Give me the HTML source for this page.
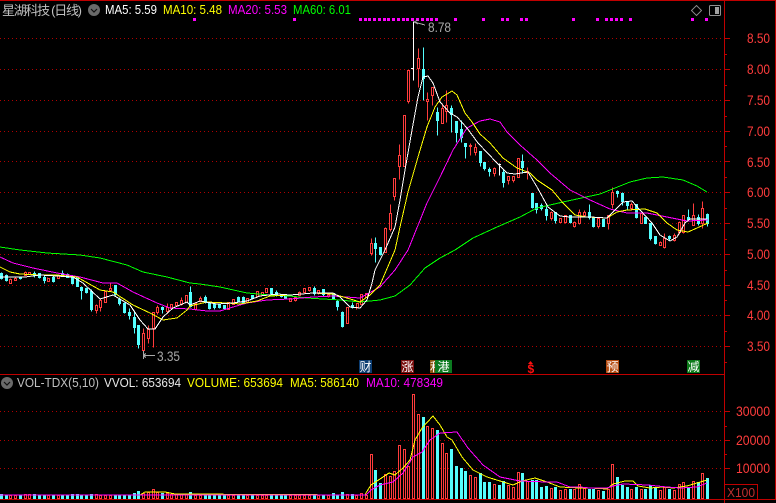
<!DOCTYPE html>
<html><head><meta charset="utf-8"><title>星湖科技</title>
<style>
html,body{margin:0;padding:0;background:#000;width:776px;height:503px;overflow:hidden}
svg{display:block;position:absolute;left:0;top:0}
text{font-family:"Liberation Sans",sans-serif;font-size:12.5px}
.cjk{font-family:"Liberation Sans","WenQuanYi Zen Hei","Noto Sans CJK SC",sans-serif}
.ax{fill:#ff3c3c;font-size:14px}
.g{fill:none;stroke:#b00000;stroke-width:1;stroke-dasharray:1 3}
.ma{fill:none;stroke-width:1;shape-rendering:crispEdges}
</style></head><body>
<svg width="776" height="503" viewBox="0 0 776 503" xmlns="http://www.w3.org/2000/svg">
<rect width="776" height="503" fill="#000"/>
<!-- grid -->
<g shape-rendering="crispEdges">
<path class="g" d="M0 38.5H724M0 69.5H724M0 100.5H724M0 131.5H724M0 161.5H724M0 192.5H724M0 223.5H724M0 254.5H724M0 285.5H724M0 315.5H724M0 346.5H724M0 411.5H724M0 440.5H724M0 468.5H724"/>
<!-- frame -->
<path fill="none" stroke="#c00000" d="M0 .5H776M724.5 0V503M775.5 0V500M0 374.5H724M0 499.5H776M724 484.5H757.5V499"/>
<path fill="none" stroke="#c00000" d="M725 38.5h5M725 54.5h2M725 69.5h5M725 85.5h2M725 100.5h5M725 116.5h2M725 131.5h5M725 146.5h2M725 161.5h5M725 177.5h2M725 192.5h5M725 208.5h2M725 223.5h5M725 239.5h2M725 254.5h5M725 270.5h2M725 285.5h5M725 300.5h2M725 315.5h5M725 331.5h2M725 346.5h5M725 362.5h2M725 411.5h5M725 426.5h2M725 440.5h5M725 454.5h2M725 468.5h5"/>
</g>
<!-- dots -->
<g fill="#ff00ff" shape-rendering="crispEdges">
<path d="M193 18h3v3h-3zM293 18h3v3h-3zM359 18h3v3h-3zM364 18h3v3h-3zM368 18h3v3h-3zM373 18h3v3h-3zM378 18h3v3h-3zM383 18h3v3h-3zM387 18h3v3h-3zM392 18h3v3h-3zM397 18h3v3h-3zM402 18h3v3h-3zM406 18h3v3h-3zM411 18h3v3h-3zM416 18h3v3h-3zM421 18h3v3h-3zM426 18h3v3h-3zM430 18h3v3h-3zM435 18h3v3h-3zM454 18h3v3h-3zM482 18h3v3h-3zM501 18h3v3h-3zM506 18h3v3h-3zM520 18h3v3h-3zM525 18h3v3h-3zM572 18h3v3h-3zM596 18h3v3h-3zM605 18h3v3h-3zM610 18h3v3h-3zM615 18h3v3h-3zM620 18h3v3h-3zM629 18h3v3h-3zM691 18h3v3h-3zM705 18h3v3h-3z"/>
</g>
<!-- candles -->
<g transform="translate(0,.5)" stroke-width="1" shape-rendering="crispEdges">
<path stroke="#ff3c3c" fill="#000" d="M10.5 278V279M9.5 279h2V283h-2zM15.5 277V278M14.5 278h2V280h-2zM25.5 271V272M24.5 272h2V275h-2zM28.5 272h2V274h-2zM47.5 277V278M47.5 278h2V281h-2zM58.5 274V275M57.5 275h2V278h-2zM96.5 304V305M95.5 305h2V310h-2zM96.5 310V313M100.5 299V300M99.5 300h2V307h-2zM100.5 307V311M104.5 291h2V302h-2zM110.5 283V288M109.5 288h2V290h-2zM143.5 328V333M142.5 333h2V350h-2zM143.5 350V355M148.5 325V329M147.5 329h2V338h-2zM148.5 338V343M152.5 312h2V328h-2zM153.5 328V347M157.5 305V307M156.5 307h2V312h-2zM157.5 312V314M167.5 303V307M166.5 307h2V311h-2zM167.5 311V312M170.5 304h2V308h-2zM171.5 308V309M175.5 302h2V305h-2zM181.5 297V300M180.5 300h2V304h-2zM181.5 304V305M185.5 295h2V302h-2zM194.5 303h2V309h-2zM195.5 309V310M200.5 296V298M199.5 298h2V301h-2zM200.5 301V302M227.5 302h2V309h-2zM232.5 299h2V304h-2zM246.5 298h2V302h-2zM256.5 291h2V296h-2zM257.5 296V297M261.5 292h2V295h-2zM265.5 288h2V292h-2zM289.5 298h2V301h-2zM295.5 296V297M294.5 297h2V300h-2zM295.5 300V301M299.5 291V292M298.5 292h2V295h-2zM303.5 288h2V292h-2zM308.5 287h2V290h-2zM309.5 290V291M317.5 290h2V293h-2zM318.5 293V294M328.5 293V294M327.5 294h2V296h-2zM328.5 296V297M346.5 307h2V323h-2zM356.5 303h2V307h-2zM356.5 307V309M360.5 294h2V304h-2zM365.5 293h2V297h-2zM371.5 238V243M370.5 243h2V253h-2zM371.5 253V255M385.5 227V228M384.5 228h2V252h-2zM390.5 204V213M389.5 213h2V229h-2zM390.5 229V231M393.5 178h2V196h-2zM394.5 196V200M399.5 144V155M398.5 155h2V166h-2zM399.5 166V179M403.5 115h2V166h-2zM407.5 70h2V101h-2zM408.5 101V103M418.5 48V58M417.5 58h2V68h-2zM418.5 68V87M427.5 92V99M426.5 99h2V101h-2zM427.5 101V120M431.5 87h2V95h-2zM432.5 95V105M442.5 103V108M441.5 108h2V123h-2zM446.5 90V105M445.5 105h2V111h-2zM446.5 111V122M470.5 143V145M469.5 145h2V146h-2zM470.5 146V155M475.5 143V147M474.5 147h2V152h-2zM475.5 152V155M494.5 167V168M493.5 168h2V173h-2zM494.5 173V176M507.5 176h2V180h-2zM508.5 180V184M512.5 176h2V180h-2zM513.5 180V182M517.5 158h2V177h-2zM527.5 167V171M526.5 171h2V172h-2zM527.5 172V179M551.5 211V212M550.5 212h2V218h-2zM551.5 218V220M559.5 218h2V222h-2zM564.5 215h2V222h-2zM565.5 222V223M574.5 221V222M573.5 222h2V226h-2zM574.5 226V227M579.5 209V212M578.5 212h2V223h-2zM579.5 223V224M584.5 210V212M583.5 212h2V215h-2zM584.5 215V217M597.5 218h2V226h-2zM598.5 226V228M607.5 215h2V223h-2zM608.5 223V229M612.5 187V192M611.5 192h2V204h-2zM612.5 204V208M631.5 202V204M630.5 204h2V208h-2zM631.5 208V210M640.5 213h2V223h-2zM660.5 241V242M659.5 242h2V245h-2zM664.5 233V238M663.5 238h2V247h-2zM664.5 247V248M674.5 233V235M673.5 235h2V240h-2zM674.5 240V241M679.5 221V222M678.5 222h2V232h-2zM679.5 232V234M682.5 215h2V232h-2zM683.5 232V233M693.5 203V215M692.5 215h2V225h-2zM702.5 201V208M701.5 208h2V223h-2zM702.5 223V228"/>
<path stroke="#54ffff" fill="#54ffff" d="M1.5 272V273M.5 273h2V278h-2zM1.5 278V279M6.5 274V275M5.5 275h2V280h-2zM6.5 280V281M19.5 277h2V278h-2zM20.5 278V279M34.5 271V273M33.5 273h2V275h-2zM34.5 275V277M38.5 273h2V277h-2zM39.5 277V278M44.5 275V277M43.5 277h2V280h-2zM44.5 280V283M53.5 276V277M52.5 277h2V281h-2zM53.5 281V282M62.5 270V273M61.5 273h2V275h-2zM67.5 273V274M66.5 274h2V277h-2zM72.5 275V276M71.5 276h2V283h-2zM72.5 283V284M76.5 277V278M76.5 278h2V286h-2zM81.5 286V287M80.5 287h2V290h-2zM81.5 290V299M86.5 287V288M85.5 288h2V292h-2zM86.5 292V293M91.5 289V291M90.5 291h2V309h-2zM91.5 309V311M114.5 285h2V294h-2zM115.5 294V295M119.5 297V299M118.5 299h2V303h-2zM119.5 303V305M124.5 302V303M123.5 303h2V312h-2zM124.5 312V313M129.5 308V312M128.5 312h2V315h-2zM129.5 315V319M134.5 310V317M133.5 317h2V327h-2zM134.5 327V333M137.5 325h2V344h-2zM138.5 344V348M162.5 306V307M161.5 307h2V309h-2zM162.5 309V313M190.5 286V292M189.5 292h2V306h-2zM190.5 306V307M205.5 295V297M204.5 297h2V302h-2zM205.5 302V303M208.5 303h2V308h-2zM209.5 308V309M214.5 303V304M213.5 304h2V307h-2zM214.5 307V309M218.5 304h2V307h-2zM219.5 307V308M223.5 305h2V308h-2zM224.5 308V309M238.5 296V297M237.5 297h2V301h-2zM238.5 301V302M243.5 296V297M242.5 297h2V302h-2zM243.5 302V303M251.5 295h2V298h-2zM252.5 298V299M270.5 288h2V293h-2zM271.5 293V294M276.5 290V292M275.5 292h2V295h-2zM276.5 295V296M280.5 294h2V296h-2zM281.5 296V297M284.5 294V294M284.5 294h2V298h-2zM285.5 298V299M314.5 286V288M313.5 288h2V293h-2zM314.5 293V295M322.5 289h2V294h-2zM323.5 294V296M332.5 293h2V299h-2zM337.5 299V301M336.5 301h2V306h-2zM337.5 306V310M342.5 311V312M341.5 312h2V326h-2zM342.5 326V327M352.5 302V305M351.5 305h2V307h-2zM352.5 307V308M375.5 237V243M374.5 243h2V248h-2zM375.5 248V262M379.5 247h2V254h-2zM380.5 254V255M423.5 47V69M422.5 69h2V78h-2zM423.5 78V100M437.5 107V112M436.5 112h2V120h-2zM437.5 120V135M451.5 105V108M450.5 108h2V114h-2zM451.5 114V132M455.5 121h2V132h-2zM456.5 132V142M461.5 120V129M460.5 129h2V137h-2zM461.5 137V142M464.5 143h2V146h-2zM465.5 146V158M479.5 151h2V162h-2zM480.5 162V166M483.5 162h2V168h-2zM484.5 168V170M489.5 167V169M488.5 169h2V171h-2zM489.5 171V176M503.5 169V172M502.5 172h2V182h-2zM503.5 182V187M522.5 154V161M521.5 161h2V167h-2zM522.5 167V173M531.5 193h2V207h-2zM532.5 207V208M535.5 203h2V209h-2zM536.5 209V213M541.5 203V205M540.5 205h2V208h-2zM541.5 208V210M546.5 205V209M545.5 209h2V215h-2zM546.5 215V220M554.5 212h2V220h-2zM555.5 220V223M569.5 215h2V222h-2zM570.5 222V223M589.5 204V212M588.5 212h2V217h-2zM589.5 217V219M592.5 217h2V226h-2zM593.5 226V227M602.5 219h2V226h-2zM617.5 190V191M616.5 191h2V193h-2zM617.5 193V197M622.5 192V193M621.5 193h2V201h-2zM622.5 201V205M627.5 201V202M626.5 202h2V205h-2zM627.5 205V210M635.5 204h2V217h-2zM636.5 217V218M644.5 217h2V223h-2zM649.5 223h2V238h-2zM650.5 238V240M654.5 236h2V243h-2zM655.5 243V244M669.5 235V236M668.5 236h2V238h-2zM669.5 238V240M688.5 209V217M687.5 217h2V219h-2zM688.5 219V220M698.5 214V217M697.5 217h2V223h-2zM698.5 223V225M707.5 213V214M706.5 214h2V223h-2zM707.5 223V226"/>
<path stroke="#fff" fill="none" d="M413.5 21V80M411 68h2M499.5 163V175M498 164h3M106 283h0"/>
</g>
<!-- price MAs -->
<polyline class="ma" stroke="#00ff00" points="0,247 20,250 47,253 80,255 100,258 127,265 143,272 167,277 190,283 200,284 220,287 247,293 270,295 290,296 307,298 323,299 340,300 360,302 380,300 395,296 410,285 425,268 440,258 455,250 473,238 497,227 520,217 537,208 563,202 600,194 630,182 647,178 663,177 683,180 697,186 707,192"/>
<polyline class="ma" stroke="#ff00ff" points="0,257 13,263 33,268 57,273 80,277 103,283 117,283 133,292 157,303 170,308 190,309 207,311 220,311 233,307 247,303 267,300 290,299 313,297 333,296 360,298 380,287 395,270 408,250 427,203 440,177 453,150 467,128 480,121 490,119 500,122 507,132 520,145 537,160 550,173 570,190 590,200 610,209 627,213 647,213 667,217 687,221 708,220"/>
<polyline class="ma" stroke="#ffff00" points="0,267 10,272 20,274 40,275 57,275 77,277 100,290 113,292 133,305 150,313 163,320 177,318 187,310 190,306 207,302 227,303 240,304 257,301 270,296 290,295 313,293 333,294 347,298 360,302 370,295 380,285 395,250 400,227 408,192 418,157 427,127 435,107 442,97 452,91 457,95 465,113 472,122 480,134 490,143 503,158 517,168 530,173 537,180 552,190 563,203 575,215 587,217 607,218 617,212 627,210 645,209 657,213 667,223 677,230 688,232 697,228 708,223"/>
<polyline class="ma" stroke="#ffffff" points="0,277 25,277 40,275 73,277 83,283 100,299 113,295 130,305 140,320 148,329 155,329 163,317 173,308 187,302 190,305 200,301 217,304 233,303 247,301 260,296 277,294 290,295 313,293 333,293 340,297 350,307 360,308 367,300 372,283 375,270 385,250 395,227 400,200 405,170 412,130 418,97 423,77 428,76 433,83 440,102 450,113 457,117 467,128 478,143 497,163 507,173 515,174 528,172 537,187 548,207 560,216 570,217 590,217 607,218 613,212 623,202 632,201 640,210 652,223 660,235 670,241 677,237 685,223 690,219 707,219"/>
<!-- volume bars -->
<g transform="translate(0,.5)" stroke-width="1" shape-rendering="crispEdges">
<path stroke="#ff3c3c" fill="#000" d="M9.5 495h2V498h-2zM14.5 495h2V498h-2zM24.5 494h2V498h-2zM28.5 494h2V498h-2zM47.5 495h2V498h-2zM57.5 495h2V498h-2zM95.5 494h2V498h-2zM99.5 495h2V498h-2zM104.5 495h2V498h-2zM109.5 495h2V498h-2zM142.5 493h2V498h-2zM147.5 492h2V498h-2zM152.5 489h2V498h-2zM156.5 492h2V498h-2zM166.5 493h2V498h-2zM170.5 494h2V498h-2zM175.5 494h2V498h-2zM180.5 494h2V498h-2zM185.5 494h2V498h-2zM194.5 495h2V498h-2zM199.5 495h2V498h-2zM227.5 495h2V498h-2zM232.5 495h2V498h-2zM246.5 495h2V498h-2zM256.5 495h2V498h-2zM261.5 495h2V498h-2zM265.5 495h2V498h-2zM289.5 495h2V498h-2zM294.5 495h2V498h-2zM298.5 495h2V498h-2zM303.5 495h2V498h-2zM308.5 495h2V498h-2zM317.5 495h2V498h-2zM327.5 495h2V498h-2zM346.5 494h2V498h-2zM355.5 495h2V498h-2zM360.5 493h2V498h-2zM365.5 495h2V498h-2zM370.5 454h2V498h-2zM384.5 474h2V498h-2zM389.5 476h2V498h-2zM393.5 471h2V498h-2zM398.5 445h2V498h-2zM403.5 449h2V498h-2zM407.5 466h2V498h-2zM412.5 394h2V498h-2zM417.5 414h2V498h-2zM426.5 426h2V498h-2zM431.5 428h2V498h-2zM441.5 443h2V498h-2zM445.5 453h2V498h-2zM469.5 475h2V498h-2zM474.5 477h2V498h-2zM493.5 484h2V498h-2zM507.5 485h2V498h-2zM512.5 487h2V498h-2zM517.5 472h2V498h-2zM526.5 481h2V498h-2zM550.5 488h2V498h-2zM559.5 490h2V498h-2zM564.5 489h2V498h-2zM573.5 489h2V498h-2zM578.5 484h2V498h-2zM583.5 488h2V498h-2zM597.5 490h2V498h-2zM607.5 489h2V498h-2zM611.5 464h2V498h-2zM630.5 489h2V498h-2zM640.5 489h2V498h-2zM659.5 490h2V498h-2zM663.5 487h2V498h-2zM673.5 490h2V498h-2zM678.5 484h2V498h-2zM682.5 482h2V498h-2zM692.5 481h2V498h-2zM701.5 473h2V498h-2z"/>
<path stroke="#54ffff" fill="#54ffff" d="M.5 494h2V498h-2zM5.5 495h2V498h-2zM19.5 495h2V498h-2zM33.5 494h2V498h-2zM38.5 495h2V498h-2zM43.5 495h2V498h-2zM52.5 495h2V498h-2zM61.5 495h2V498h-2zM66.5 495h2V498h-2zM71.5 494h2V498h-2zM76.5 494h2V498h-2zM80.5 495h2V498h-2zM85.5 495h2V498h-2zM90.5 494h2V498h-2zM114.5 495h2V498h-2zM118.5 495h2V498h-2zM123.5 495h2V498h-2zM128.5 495h2V498h-2zM133.5 493h2V498h-2zM137.5 491h2V498h-2zM161.5 493h2V498h-2zM189.5 492h2V498h-2zM204.5 495h2V498h-2zM208.5 495h2V498h-2zM213.5 495h2V498h-2zM218.5 495h2V498h-2zM223.5 495h2V498h-2zM237.5 495h2V498h-2zM242.5 495h2V498h-2zM251.5 495h2V498h-2zM270.5 495h2V498h-2zM275.5 495h2V498h-2zM280.5 495h2V498h-2zM284.5 495h2V498h-2zM313.5 495h2V498h-2zM322.5 495h2V498h-2zM332.5 493h2V498h-2zM336.5 495h2V498h-2zM341.5 492h2V498h-2zM351.5 494h2V498h-2zM374.5 470h2V498h-2zM379.5 483h2V498h-2zM422.5 417h2V498h-2zM436.5 430h2V498h-2zM450.5 449h2V498h-2zM455.5 466h2V498h-2zM460.5 468h2V498h-2zM464.5 471h2V498h-2zM479.5 473h2V498h-2zM483.5 482h2V498h-2zM488.5 482h2V498h-2zM498.5 485h2V498h-2zM502.5 481h2V498h-2zM521.5 473h2V498h-2zM531.5 480h2V498h-2zM535.5 480h2V498h-2zM540.5 487h2V498h-2zM545.5 486h2V498h-2zM554.5 487h2V498h-2zM569.5 489h2V498h-2zM588.5 489h2V498h-2zM592.5 489h2V498h-2zM602.5 491h2V498h-2zM616.5 477h2V498h-2zM621.5 485h2V498h-2zM626.5 487h2V498h-2zM635.5 487h2V498h-2zM644.5 489h2V498h-2zM649.5 485h2V498h-2zM654.5 488h2V498h-2zM668.5 489h2V498h-2zM687.5 488h2V498h-2zM697.5 482h2V498h-2zM706.5 478h2V498h-2z"/>
</g>
<polyline class="ma" stroke="#ffff00" points="0,495 140,495 145,492 165,492 175,494 365,495 366,493 371,485 380,479 389,473 395,475 403,468 410,460 415,440 422,428 433,416 440,425 447,437 452,440 462,457 473,470 487,477 500,481 513,485 522,481 535,478 547,482 560,487 580,488 590,488 607,489 613,484 625,481 633,481 638,486 650,488 663,487 673,488 687,486 697,483 707,480"/>
<polyline class="ma" stroke="#ff00ff" points="0,495 366,495 371,490 380,485 393,482 403,473 413,457 422,452 430,440 440,433 457,432 468,448 483,465 500,477 520,481 547,482 557,482 570,487 580,487 590,488 607,488 613,486 623,484 648,485 667,487 680,488 697,487 707,483"/>
<!-- axis labels -->
<text class="ax" x="747" y="43" textLength="23" lengthAdjust="spacingAndGlyphs">8.50</text>
<text class="ax" x="747" y="74" textLength="23" lengthAdjust="spacingAndGlyphs">8.00</text>
<text class="ax" x="747" y="105" textLength="23" lengthAdjust="spacingAndGlyphs">7.50</text>
<text class="ax" x="747" y="136" textLength="23" lengthAdjust="spacingAndGlyphs">7.00</text>
<text class="ax" x="747" y="167" textLength="23" lengthAdjust="spacingAndGlyphs">6.50</text>
<text class="ax" x="747" y="197" textLength="23" lengthAdjust="spacingAndGlyphs">6.00</text>
<text class="ax" x="747" y="228" textLength="23" lengthAdjust="spacingAndGlyphs">5.50</text>
<text class="ax" x="747" y="259" textLength="23" lengthAdjust="spacingAndGlyphs">5.00</text>
<text class="ax" x="747" y="290" textLength="23" lengthAdjust="spacingAndGlyphs">4.50</text>
<text class="ax" x="747" y="320" textLength="23" lengthAdjust="spacingAndGlyphs">4.00</text>
<text class="ax" x="747" y="351" textLength="23" lengthAdjust="spacingAndGlyphs">3.50</text>
<text class="ax" x="736" y="416" textLength="34" lengthAdjust="spacingAndGlyphs">30000</text>
<text class="ax" x="736" y="445" textLength="34" lengthAdjust="spacingAndGlyphs">20000</text>
<text class="ax" x="736" y="473" textLength="34" lengthAdjust="spacingAndGlyphs">10000</text>
<text x="727" y="497" textLength="28" lengthAdjust="spacingAndGlyphs" style="fill:#c03030;font-size:13px">X100</text>
<!-- header -->
<text class="cjk" x="2" y="15" textLength="80" style="fill:#c0c0c0;font-size:13px">星湖科技 (日线)</text>
<circle cx="94" cy="10" r="6" fill="#6a6a6a"/><path d="M91 9l3 3 3-3" fill="none" stroke="#111" stroke-width="1.2"/>
<text x="105" y="14" textLength="52" lengthAdjust="spacingAndGlyphs" fill="#fff">MA5: 5.59</text>
<text x="163" y="14" textLength="59" lengthAdjust="spacingAndGlyphs" fill="#ffff00">MA10: 5.48</text>
<text x="228" y="14" textLength="59" lengthAdjust="spacingAndGlyphs" fill="#ff00ff">MA20: 5.53</text>
<text x="293" y="14" textLength="58" lengthAdjust="spacingAndGlyphs" fill="#00ff00">MA60: 6.01</text>
<path d="M696.5 5.5l5 5-5 5-5-5z" fill="none" stroke="#808080" shape-rendering="crispEdges"/>
<rect x="709.5" y="5.5" width="11" height="10" rx="1" fill="none" stroke="#909090"/><rect x="715" y="7" width="4" height="7" fill="#a0a0a0"/>
<!-- annotations -->
<path d="M414 22l4-2M414 22l4 2M414 22l11 3" stroke="#a8a8a8" fill="none" shape-rendering="crispEdges"/>
<text x="428" y="32" textLength="23" lengthAdjust="spacingAndGlyphs" fill="#a8a8a8" style="font-size:14px">8.78</text>
<path d="M143 355.5h12M143 355.5l3-2M143 355.5l3 2M143.5 351V359" stroke="#a8a8a8" fill="none" shape-rendering="crispEdges"/>
<text x="157" y="361" textLength="23" lengthAdjust="spacingAndGlyphs" fill="#a8a8a8" style="font-size:14px">3.35</text>
<!-- signs -->
<rect x="359" y="360" width="13" height="13" fill="#0c3d72"/><text class="cjk" x="359.5" y="371" style="font-size:12px" fill="#fff">财</text>
<rect x="401" y="360" width="13" height="13" fill="#7a1010"/><text class="cjk" x="401.5" y="371" style="font-size:12px" fill="#fff">涨</text>
<rect x="430" y="360" width="6" height="13" fill="#8a5410"/><text class="cjk" x="430" y="371" style="font-size:12px" fill="#fff">利</text>
<rect x="435" y="360" width="17" height="13" fill="#0b7a20"/><text class="cjk" x="437.5" y="371" style="font-size:12px" fill="#fff">港</text>
<text x="527.5" y="373" fill="#ff1010" style="font-size:12px;font-weight:bold">$</text><path d="M530.5 361l-2.5 3h5z" fill="#ff1010"/>
<rect x="606" y="360" width="13" height="13" fill="#b44a10"/><text class="cjk" x="606.5" y="371" style="font-size:12px" fill="#fff">预</text>
<rect x="687" y="360" width="13" height="13" fill="#0b7a18"/><text class="cjk" x="687.5" y="371" style="font-size:12px" fill="#fff">减</text>
<!-- volume header -->
<circle cx="7" cy="383" r="6" fill="#6a6a6a"/><path d="M4 382l3 3 3-3" fill="none" stroke="#111" stroke-width="1.2"/>
<text x="17" y="387" textLength="82" lengthAdjust="spacingAndGlyphs" fill="#c0c0c0">VOL-TDX(5,10)</text>
<text x="104" y="387" textLength="77" lengthAdjust="spacingAndGlyphs" fill="#e8e8e8">VVOL: 653694</text>
<text x="187" y="387" textLength="96" lengthAdjust="spacingAndGlyphs" fill="#ffff00">VOLUME: 653694</text>
<text x="290" y="387" textLength="69" lengthAdjust="spacingAndGlyphs" fill="#ffff00">MA5: 586140</text>
<text x="366" y="387" textLength="77" lengthAdjust="spacingAndGlyphs" fill="#ff00ff">MA10: 478349</text>
</svg>
</body></html>
